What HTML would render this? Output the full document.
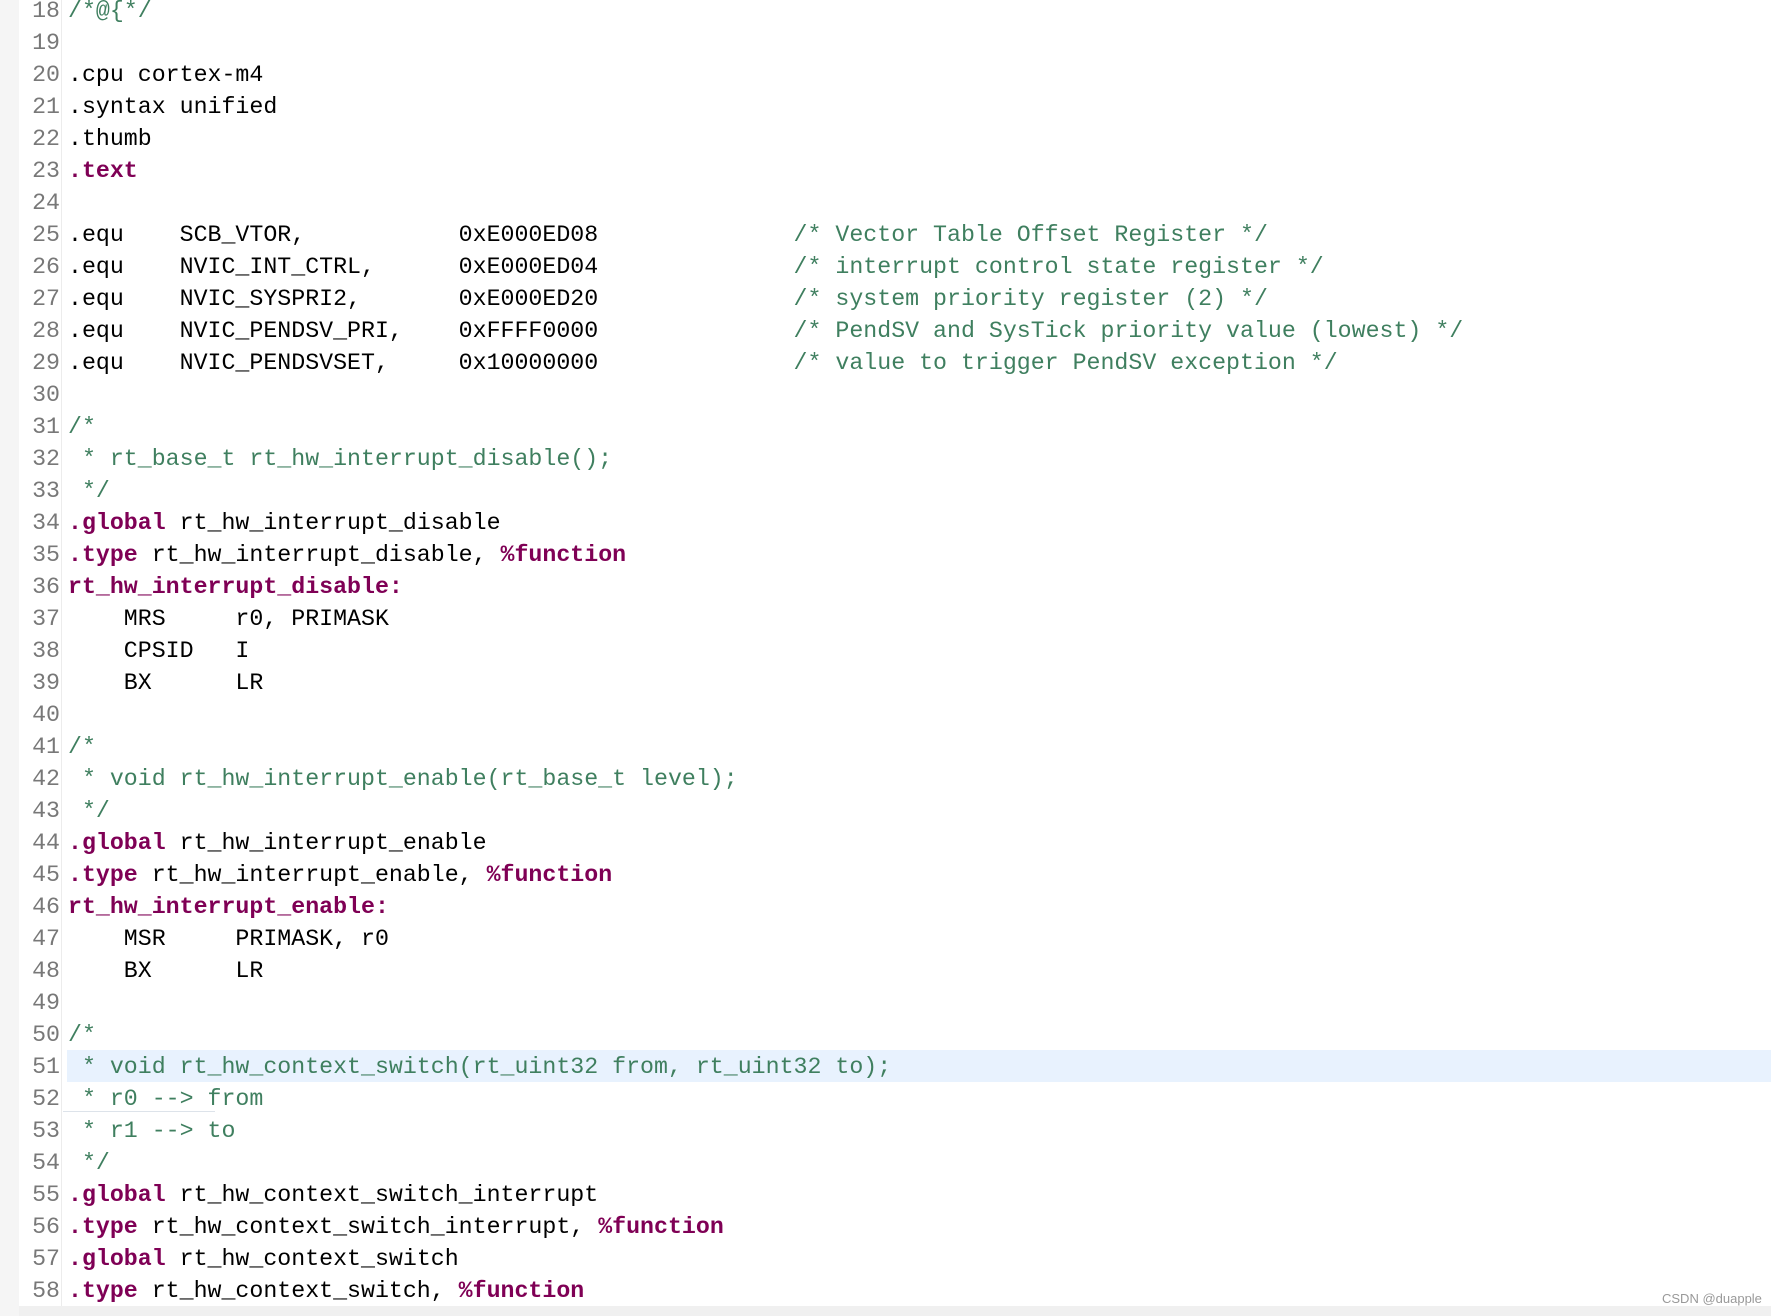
<!DOCTYPE html>
<html><head><meta charset="utf-8"><style>
html,body{margin:0;padding:0;}
body{width:1771px;height:1316px;background:#fff;position:relative;overflow:hidden;font-family:"Liberation Mono",monospace;font-size:23.25px;}
.gut{position:absolute;left:0;top:0;width:19px;height:1316px;background:#f5f5f5;}
.sep{position:absolute;left:61px;top:0;width:1px;height:1306px;background:#ececec;}
.bot{position:absolute;left:19px;top:1306px;width:1752px;height:10px;background:#f0f0f0;}
.hl{position:absolute;left:67px;top:1050px;width:1704px;height:32px;background:#e8f2fe;}
.ul{position:absolute;left:63px;top:1111px;width:152px;height:1px;background:#dde3ea;}
.ln{position:absolute;left:0;width:60px;text-align:right;color:#787878;height:32px;line-height:32px;white-space:pre;margin-top:1px;}
.cd{position:absolute;left:68px;height:32px;line-height:32px;white-space:pre;color:#000;margin-top:1px;}
.k{color:#7f0055;font-weight:bold;}
.c{color:#3f7f5f;}
.wm{position:absolute;left:1662px;top:1291px;font-family:"Liberation Sans",sans-serif;font-size:13px;color:#999;}
</style></head><body>
<div class="gut"></div><div class="sep"></div><div class="bot"></div><div class="hl"></div><div class="ul"></div>
<div class="ln" style="top:-6px">18</div><div class="cd c" style="top:-6px">/*@{*/</div>
<div class="ln" style="top:26px">19</div>
<div class="ln" style="top:58px">20</div><div class="cd" style="top:58px">.cpu cortex-m4</div>
<div class="ln" style="top:90px">21</div><div class="cd" style="top:90px">.syntax unified</div>
<div class="ln" style="top:122px">22</div><div class="cd" style="top:122px">.thumb</div>
<div class="ln" style="top:154px">23</div><div class="cd k" style="top:154px">.text</div>
<div class="ln" style="top:186px">24</div>
<div class="ln" style="top:218px">25</div><div class="cd" style="top:218px">.equ    SCB_VTOR,           0xE000ED08              <span class="c">/* Vector Table Offset Register */</span></div>
<div class="ln" style="top:250px">26</div><div class="cd" style="top:250px">.equ    NVIC_INT_CTRL,      0xE000ED04              <span class="c">/* interrupt control state register */</span></div>
<div class="ln" style="top:282px">27</div><div class="cd" style="top:282px">.equ    NVIC_SYSPRI2,       0xE000ED20              <span class="c">/* system priority register (2) */</span></div>
<div class="ln" style="top:314px">28</div><div class="cd" style="top:314px">.equ    NVIC_PENDSV_PRI,    0xFFFF0000              <span class="c">/* PendSV and SysTick priority value (lowest) */</span></div>
<div class="ln" style="top:346px">29</div><div class="cd" style="top:346px">.equ    NVIC_PENDSVSET,     0x10000000              <span class="c">/* value to trigger PendSV exception */</span></div>
<div class="ln" style="top:378px">30</div>
<div class="ln" style="top:410px">31</div><div class="cd c" style="top:410px">/*</div>
<div class="ln" style="top:442px">32</div><div class="cd c" style="top:442px"> * rt_base_t rt_hw_interrupt_disable();</div>
<div class="ln" style="top:474px">33</div><div class="cd c" style="top:474px"> */</div>
<div class="ln" style="top:506px">34</div><div class="cd" style="top:506px"><span class="k">.global</span> rt_hw_interrupt_disable</div>
<div class="ln" style="top:538px">35</div><div class="cd" style="top:538px"><span class="k">.type</span> rt_hw_interrupt_disable, <span class="k">%function</span></div>
<div class="ln" style="top:570px">36</div><div class="cd k" style="top:570px">rt_hw_interrupt_disable:</div>
<div class="ln" style="top:602px">37</div><div class="cd" style="top:602px">    MRS     r0, PRIMASK</div>
<div class="ln" style="top:634px">38</div><div class="cd" style="top:634px">    CPSID   I</div>
<div class="ln" style="top:666px">39</div><div class="cd" style="top:666px">    BX      LR</div>
<div class="ln" style="top:698px">40</div>
<div class="ln" style="top:730px">41</div><div class="cd c" style="top:730px">/*</div>
<div class="ln" style="top:762px">42</div><div class="cd c" style="top:762px"> * void rt_hw_interrupt_enable(rt_base_t level);</div>
<div class="ln" style="top:794px">43</div><div class="cd c" style="top:794px"> */</div>
<div class="ln" style="top:826px">44</div><div class="cd" style="top:826px"><span class="k">.global</span> rt_hw_interrupt_enable</div>
<div class="ln" style="top:858px">45</div><div class="cd" style="top:858px"><span class="k">.type</span> rt_hw_interrupt_enable, <span class="k">%function</span></div>
<div class="ln" style="top:890px">46</div><div class="cd k" style="top:890px">rt_hw_interrupt_enable:</div>
<div class="ln" style="top:922px">47</div><div class="cd" style="top:922px">    MSR     PRIMASK, r0</div>
<div class="ln" style="top:954px">48</div><div class="cd" style="top:954px">    BX      LR</div>
<div class="ln" style="top:986px">49</div>
<div class="ln" style="top:1018px">50</div><div class="cd c" style="top:1018px">/*</div>
<div class="ln" style="top:1050px">51</div><div class="cd c" style="top:1050px"> * void rt_hw_context_switch(rt_uint32 from, rt_uint32 to);</div>
<div class="ln" style="top:1082px">52</div><div class="cd c" style="top:1082px"> * r0 --&gt; from</div>
<div class="ln" style="top:1114px">53</div><div class="cd c" style="top:1114px"> * r1 --&gt; to</div>
<div class="ln" style="top:1146px">54</div><div class="cd c" style="top:1146px"> */</div>
<div class="ln" style="top:1178px">55</div><div class="cd" style="top:1178px"><span class="k">.global</span> rt_hw_context_switch_interrupt</div>
<div class="ln" style="top:1210px">56</div><div class="cd" style="top:1210px"><span class="k">.type</span> rt_hw_context_switch_interrupt, <span class="k">%function</span></div>
<div class="ln" style="top:1242px">57</div><div class="cd" style="top:1242px"><span class="k">.global</span> rt_hw_context_switch</div>
<div class="ln" style="top:1274px">58</div><div class="cd" style="top:1274px"><span class="k">.type</span> rt_hw_context_switch, <span class="k">%function</span></div>
<div class="wm">CSDN @duapple</div>
</body></html>
